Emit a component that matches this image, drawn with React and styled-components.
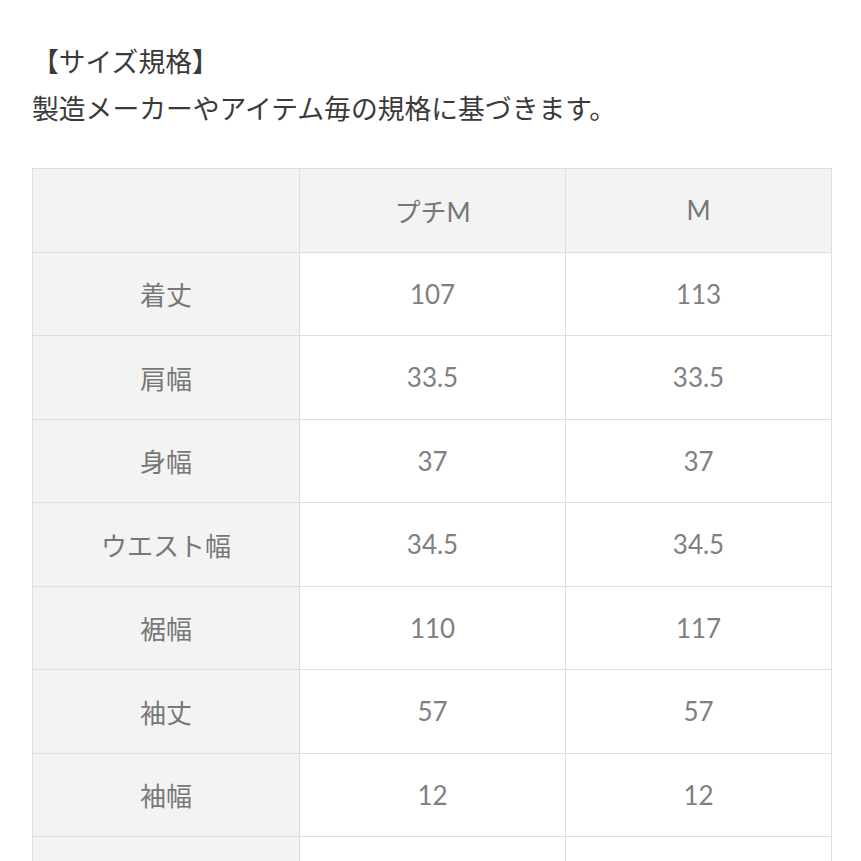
import React from "react";
import styled, { createGlobalStyle } from "styled-components";

const Global = createGlobalStyle`
  body {
    margin: 0;
    background: #fff;
    font-family: Lato, "Noto Sans CJK JP", sans-serif;
  }
`;

const Page = styled.div`
  padding: 37px 30px 0 32px;
  height: 861px;
  overflow: hidden;
  box-sizing: border-box;
`;

const Intro = styled.p`
  margin: 0 0 37px;
  font-size: 26.8px;
  line-height: 47px;
  color: #3a3a3a;
  font-family: "Noto Sans CJK JP", sans-serif;
`;

const Table = styled.table`
  width: 800px;
  border-collapse: collapse;
  table-layout: fixed;
`;

const Cell = styled.td`
  height: 82.5px;
  padding: 0;
  border: 1px solid #dedede;
  text-align: center;
  vertical-align: middle;
  font-size: 26px;
  color: ${(p) => (p.$head ? "#777" : "#808080")};
  background: ${(p) => (p.$shade ? "#f3f3f3" : "#fff")};
  font-family: Lato, "Noto Sans CJK JP", sans-serif;
`;

const rows = [
  ["着丈", "107", "113"],
  ["肩幅", "33.5", "33.5"],
  ["身幅", "37", "37"],
  ["ウエスト幅", "34.5", "34.5"],
  ["裾幅", "110", "117"],
  ["袖丈", "57", "57"],
  ["袖幅", "12", "12"],
  ["", "", ""],
];

export default function App() {
  return (
    <>
      <Global />
      <Page>
        <Intro>
          【サイズ規格】
          <br />
          製造メーカーやアイテム毎の規格に基づきます。
        </Intro>
        <Table>
          <colgroup>
            <col style={{ width: 267 }} />
            <col style={{ width: 266 }} />
            <col style={{ width: 266 }} />
          </colgroup>
          <tbody>
            <tr>
              <Cell $shade $head />
              <Cell $shade $head>プチM</Cell>
              <Cell $shade $head>M</Cell>
            </tr>
            {rows.map((r, i) => (
              <tr key={i}>
                <Cell $shade $head>{r[0]}</Cell>
                <Cell>{r[1]}</Cell>
                <Cell>{r[2]}</Cell>
              </tr>
            ))}
          </tbody>
        </Table>
      </Page>
    </>
  );
}
